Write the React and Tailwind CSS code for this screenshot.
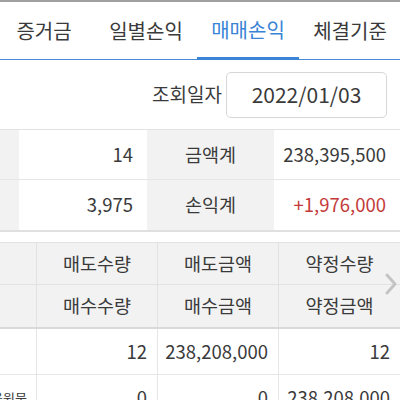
import React from 'react';

const tabs = ['증거금', '일별손익', '매매손익', '체결기준'];

const font = { fontFamily: '"Noto Sans CJK KR", "Noto Sans", sans-serif' };

const App = () => {
  const active = 2;

  return (
    <div className="w-[400px] h-[400px] overflow-hidden bg-white text-[#3a3a3a]" style={font}>
      <div className="h-[2px] bg-[#a0a0a0]" />

      {/* Tabs */}
      <div className="h-[58px] border-b border-[#4a8bd6] flex ml-[-7px]">
        {tabs.map((t, i) => (
          <div
            key={t}
            className={`w-[102px] shrink-0 flex items-center justify-center text-[20px] ${
              i === active ? 'text-[#3a84d6] border-b-[3px] border-[#3a84d6] mb-[-1px]' : 'text-[#3a3a3a]'
            }`}
          >
            {t}
          </div>
        ))}
      </div>

      {/* Date row */}
      <div className="h-[70px] flex items-center justify-end pr-[13px] gap-[4px] border-b border-[#e2e2e2]">
        <span className="text-[19px]">조회일자</span>
        <div className="w-[161px] h-[46px] border border-[#d6d6d6] rounded-[5px] flex items-center justify-center text-[21px]">
          2022/01/03
        </div>
      </div>

      {/* Summary */}
      <div className="border-b-2 border-[#e0e0e0]">
        <div className="flex h-[50px] border-b border-[#e6e6e6]">
          <div className="w-[19px] bg-[#f2f2f2]" />
          <div className="w-[128px] flex items-center justify-end pr-[14px] text-[18.5px]">14</div>
          <div className="w-[127px] bg-[#f2f2f2] flex items-center justify-center text-[18.5px]">금액계</div>
          <div className="flex-1 flex items-center justify-end pr-[14px] text-[18.5px]">238,395,500</div>
        </div>
        <div className="flex h-[50px]">
          <div className="w-[19px] bg-[#f2f2f2]" />
          <div className="w-[128px] flex items-center justify-end pr-[14px] text-[18.5px]">3,975</div>
          <div className="w-[127px] bg-[#f2f2f2] flex items-center justify-center text-[18.5px]">손익계</div>
          <div className="flex-1 flex items-center justify-end pr-[14px] text-[18.5px] text-[#c43a3a]">+1,976,000</div>
        </div>
      </div>

      {/* Detail table */}
      <div className="mt-[10px] relative border-t border-[#e2e2e2]">
        <div className="bg-[#f2f2f2] border-b-2 border-[#d9d9d9]">
          <div className="flex h-[42px] border-b border-[#e2e2e2]">
            <div className="w-[37px] border-r border-[#e2e2e2]" />
            <div className="w-[121px] border-r border-[#e2e2e2] flex items-center justify-center text-[18.5px]">매도수량</div>
            <div className="w-[121px] border-r border-[#e2e2e2] flex items-center justify-center text-[18.5px]">매도금액</div>
            <div className="flex-1 flex items-center justify-center text-[18.5px]">약정수량</div>
          </div>
          <div className="flex h-[42px]">
            <div className="w-[37px] border-r border-[#e2e2e2]" />
            <div className="w-[121px] border-r border-[#e2e2e2] flex items-center justify-center text-[18.5px]">매수수량</div>
            <div className="w-[121px] border-r border-[#e2e2e2] flex items-center justify-center text-[18.5px]">매수금액</div>
            <div className="flex-1 flex items-center justify-center text-[18.5px]">약정금액</div>
          </div>
        </div>
        <div className="flex h-[46px] border-b border-[#e6e6e6]">
          <div className="w-[37px] border-r border-[#e6e6e6]" />
          <div className="w-[121px] border-r border-[#e6e6e6] flex items-center justify-end pr-[10px] text-[18.5px]">12</div>
          <div className="w-[121px] border-r border-[#e6e6e6] flex items-center justify-end pr-[10px] text-[18.5px]">238,208,000</div>
          <div className="flex-1 flex items-center justify-end pr-[10px] text-[18.5px]">12</div>
        </div>
        <div className="flex h-[46px]">
          <div className="w-[37px] border-r border-[#e6e6e6] overflow-hidden flex items-center justify-end pr-[9px]">
            <span className="text-[13px] whitespace-nowrap">대용원물</span>
          </div>
          <div className="w-[121px] border-r border-[#e6e6e6] flex items-center justify-end pr-[10px] text-[18.5px]">0</div>
          <div className="w-[121px] border-r border-[#e6e6e6] flex items-center justify-end pr-[10px] text-[18.5px]">0</div>
          <div className="flex-1 flex items-center justify-end pr-[10px] text-[18.5px]">238,208,000</div>
        </div>

        {/* scroll hint */}
        <svg className="absolute right-[2px] top-[30px]" width="14" height="22" viewBox="0 0 14 22">
          <path d="M3 2 L11 11 L3 20" fill="none" stroke="#c4c4c4" strokeWidth="3" strokeLinecap="round" strokeLinejoin="round" />
        </svg>
      </div>
    </div>
  );
};

export default App;
